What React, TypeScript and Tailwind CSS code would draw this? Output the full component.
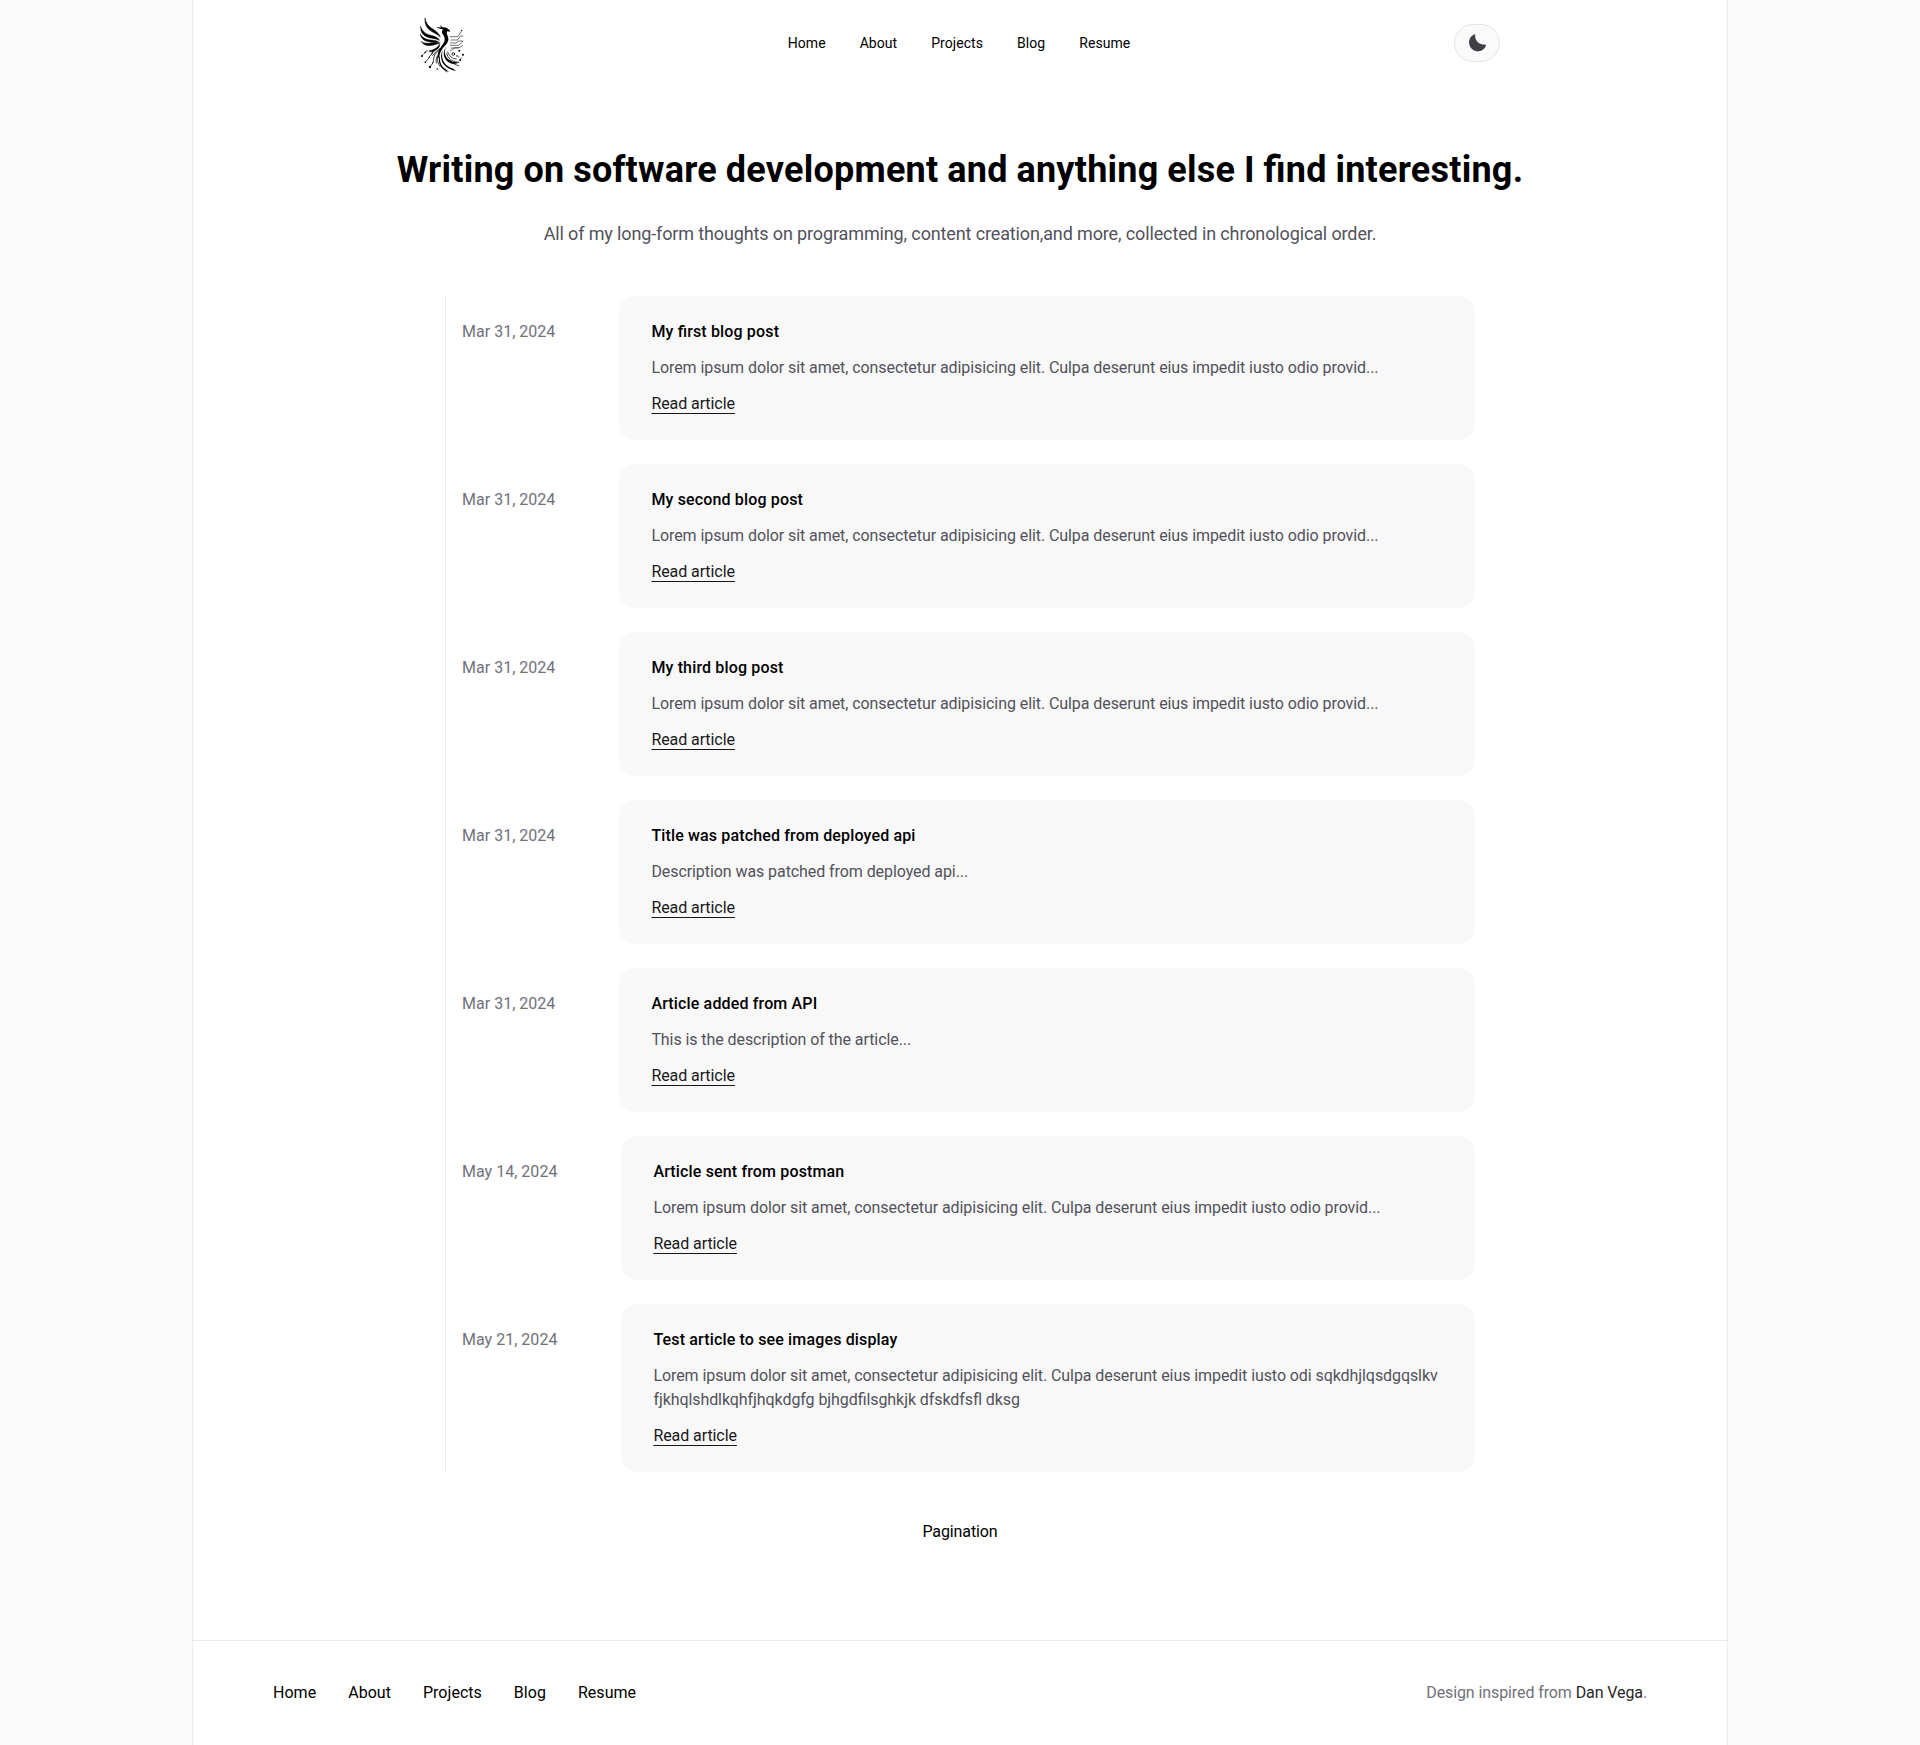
const links = ["Home", "About", "Projects", "Blog", "Resume"];
const lorem = "Lorem ipsum dolor sit amet, consectetur adipisicing elit. Culpa deserunt eius impedit iusto odio provid...";
const posts = [
  { date: "Mar 31, 2024", title: "My first blog post", text: lorem },
  { date: "Mar 31, 2024", title: "My second blog post", text: lorem },
  { date: "Mar 31, 2024", title: "My third blog post", text: lorem },
  { date: "Mar 31, 2024", title: "Title was patched from deployed api", text: "Description was patched from deployed api..." },
  { date: "Mar 31, 2024", title: "Article added from API", text: "This is the description of the article..." },
  { date: "May 14, 2024", title: "Article sent from postman", text: lorem },
  {
    date: "May 21, 2024",
    title: "Test article to see images display",
    text: "Lorem ipsum dolor sit amet, consectetur adipisicing elit. Culpa deserunt eius impedit iusto odi sqkdhjlqsdgqslkv fjkhqlshdlkqhfjhqkdgfg bjhgdfilsghkjk dfskdfsfl dksg",
  },
];

function Logo() {
  return (
    <svg className="h-16 w-13" viewBox="48 36 156 192" fill="none" stroke="#000" strokeLinecap="round">
      <g fill="#000" strokeWidth="1.4" strokeLinejoin="round">
        <path d="M75 52c4 17 11 24 22 31 11 8 20 13 24 25-8-8-18-11-28-18-14-10-19-20-18-38Z" />
        <path d="M62 77c6 15 15 22 30 26 13 3 22 7 27 15-9-5-19-5-31-8-18-5-26-14-26-33Z" />
        <path d="M61 100c7 11 17 16 31 17 12 1 20 2 26 7-9 0-17 1-27-1-17-2-27-8-30-23Z" />
        <path d="M64 122c9 5 18 6 29 4 10-2 17-2 23 1-8 2-13 4-21 6-13 2-24-1-31-11Z" />
        <path d="M119 130c-8 12-19 18-33 20 10 6 17-1 24-5 6-4 10-9 9-15Z" />
      </g>
      <g fill="#000" stroke="none">
        <path d="M108 76c5 4 9 2 13 4 2-3 1-6-1-9 4 3 5 7 8 8 8-2 13 2 21 9l2 4-9-1c-5 5 2 12 3 21 2 15-13 23-20 35-6 10-9 19-6 32-8-14-6-26 1-37 6-10 14-16 14-28 0-10-8-13-8-21 0-4 2-6 3-8-8 0-15-2-21-9Z" />
        <path d="M139 136c-8 15-5 29 6 39 9 8 20 10 36 8-16 9-31 6-41-4-12-12-11-29-1-43Z" />
        <path d="M128 147c-5 22 1 38 15 48 9 7 19 7 25 15-17-3-29-10-37-20-9-13-10-28-3-43Z" />
        <path d="M121 161c-4 18 2 34 14 42 6 4 10 6 12 10-14-4-23-10-27-21-5-11-4-21 1-31Z" />
      </g>
      <g strokeWidth="2.2">
        <path d="M98 132l22-6M93 158l24-20M98 163l20-21" />
        <path d="M121 143c-6 9-14 13-17 19-4 9-2 16-6 24M117 157c-7 10-10 17-8 29M113 166c-3 13 1 22 7 30" />
        <path d="M140 157c4 16 15 24 31 26M143 153c5 13 14 20 26 21M151 179c8 9 16 13 25 15M129 200l10 13" />
        <path d="M86 169l12-12v-8M77 182l12-13M93 194l7-10" />
      </g>
      <g strokeWidth="1.6">
        <path d="M150 107h24l11-18M152 117h20l10-12h7M151 126h18l5-6h14M151 133h25l12-11M153 141h22l13-7M151 149l14-9h12" />
        <path d="M67 163l15-13M74 154l5-5M175 181l10-11M173 164l4 6" />
        <circle cx="160" cy="159" r="4" strokeWidth="2.4" />
      </g>
      <g fill="#000" stroke="none">
        <circle cx="185" cy="88" r="2" />
        <circle cx="66" cy="165" r="3" />
        <circle cx="75" cy="154" r="2" />
        <circle cx="76" cy="184" r="2.5" />
        <circle cx="90" cy="198" r="3.5" />
        <circle cx="112" cy="204" r="2.5" />
        <circle cx="178" cy="149" r="3" />
        <circle cx="189" cy="161" r="3" />
        <circle cx="171" cy="165" r="2" />
        <circle cx="181" cy="177" r="3" />
      </g>
    </svg>
  );
}

function Moon() {
  return (
    <svg className="ml-px size-[18px]" viewBox="0 0 18 18" fill="#3f3f46">
      <path d="M6.3 0C5.2 5.8 9.4 11.4 17.3 10.8A8.8 8.8 0 1 1 6.3 0Z" />
    </svg>
  );
}

export default function App() {
  return (
    <div className="min-h-[1745px] bg-[#fafafa] font-['Roboto',sans-serif] text-base text-black [font-feature-settings:'liga'_1]">
      <div className="mx-auto flex min-h-[1745px] w-4/5 flex-col border-x border-[#ececee] bg-white">
        <header className="mx-auto flex h-[86px] w-[1084px] items-center justify-between pr-[4px]">
          <a href="#" className="-ml-[2px] pt-[3px]"><Logo /></a>
          <nav className="-ml-[4px] flex gap-[34px] text-sm tracking-[0.06px]">
            {links.map((l) => <a key={l} href="#">{l}</a>)}
          </nav>
          <button className="-mr-[2px] flex h-[38px] w-[46px] items-center justify-center rounded-full border border-[#e4e4e7] bg-[#fafafa]">
            <Moon />
          </button>
        </header>
        <main className="flex flex-col items-center">
          <h1 className="mt-[64px] text-4xl leading-10 font-bold tracking-[0.24px] [word-spacing:-0.4px] whitespace-nowrap">
            Writing on software development and anything else I find interesting.
          </h1>
          <p className="mt-[30px] text-lg leading-7 tracking-[-0.13px] text-[#52525b]">
            All of my long-form thoughts on programming, content creation,and more, collected in chronological order.
          </p>
          <div className="mt-12 flex w-[1030px] flex-col gap-6 border-l border-[#ececee] pl-4">
            {posts.map((p) => (
              <article key={p.title} className="flex gap-16">
                <time className="shrink-0 pt-6 tracking-[0.02px] text-[#71717a]">{p.date}</time>
                <div className="flex grow flex-col items-start gap-3 rounded-2xl bg-[#f8f8f8] px-8 py-6">
                  <h2 className="font-medium tracking-[0.15px]">{p.title}</h2>
                  <p className="tracking-[-0.075px] text-[#52525b]">{p.text}</p>
                  <a href="#" className="tracking-[-0.08px] text-[#18181b] underline underline-offset-4">Read article</a>
                </div>
              </article>
            ))}
          </div>
          <p className="mt-12 tracking-[-0.1px]">Pagination</p>
        </main>
        <footer className="mt-[96px] flex items-center justify-between border-t border-[#ececee] px-20 pt-10">
          <nav className="flex gap-8 tracking-[0.03px]">
            {links.map((l) => <a key={l} href="#">{l}</a>)}
          </nav>
          <p className="tracking-[-0.1px] text-[#71717a]">
            Design inspired from <a href="#" className="text-[#27272a]">Dan Vega</a>.
          </p>
        </footer>
      </div>
    </div>
  );
}
